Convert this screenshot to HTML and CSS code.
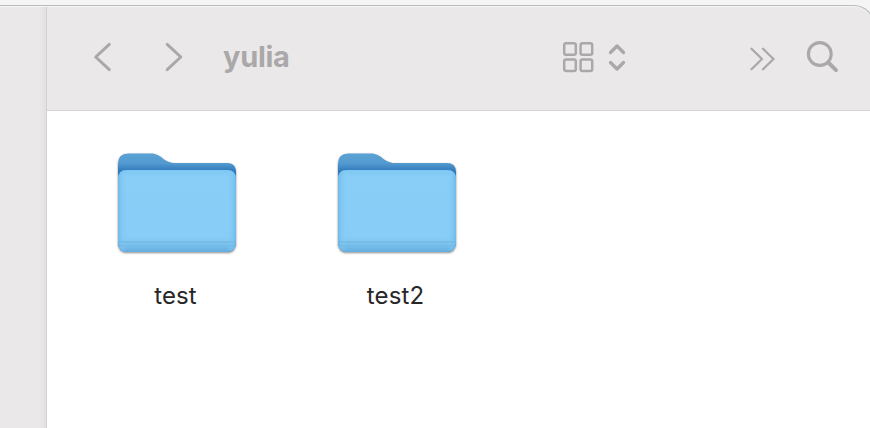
FILE: index.html
```html
<!DOCTYPE html>
<html lang="en">
<head>
<meta charset="utf-8">
<title>yulia</title>
<link rel="stylesheet" href="styles.css">
</head>
<body>
<svg class="defs" width="0" height="0" aria-hidden="true">
  <defs>
    <linearGradient id="back" x1="0" y1="0" x2="0" y2="1">
      <stop offset="0" stop-color="#5ba3d6"/><stop offset=".1" stop-color="#529acf"/><stop offset=".18" stop-color="#3079bb"/><stop offset="1" stop-color="#3079bb"/>
    </linearGradient>
    <linearGradient id="edge" x1="0" y1="0" x2="1" y2="0">
      <stop offset="0" stop-color="#66b5e5" stop-opacity=".8"/><stop offset=".025" stop-color="#79c2ed" stop-opacity=".65"/><stop offset=".08" stop-color="#88cdf6" stop-opacity="0"/>
      <stop offset=".92" stop-color="#88cdf6" stop-opacity="0"/><stop offset=".975" stop-color="#79c2ed" stop-opacity=".65"/><stop offset="1" stop-color="#66b5e5" stop-opacity=".8"/>
    </linearGradient>
    <linearGradient id="front" x1="0" y1="0" x2="0" y2="1">
      <stop offset="0" stop-color="#7ec8f2"/><stop offset=".08" stop-color="#88cef7"/><stop offset=".8" stop-color="#88cdf7"/><stop offset=".87" stop-color="#82c8f2"/>
      <stop offset=".88" stop-color="#76bce7"/><stop offset=".91" stop-color="#7dc3ee"/><stop offset=".95" stop-color="#6fb8e6"/><stop offset="1" stop-color="#66aedf"/>
    </linearGradient>
    <symbol id="folder" viewBox="0 0 128 108">
      <path d="M5 14Q5 3.5 15 3.5H38C49 3.5 50 13 62 13H114Q123 13 123 22V92Q123 102 113 102H15Q5 102 5 92Z" fill="url(#back)"/>
      <path d="M5 29Q5 20 14 20H114Q123 20 123 29V92Q123 102 113 102H15Q5 102 5 92Z" fill="url(#front)"/>
      <path d="M5 29Q5 20 14 20H114Q123 20 123 29V92Q123 102 113 102H15Q5 102 5 92Z" fill="url(#edge)"/>
      <path d="M5 91.5H123M5 95.5H123" stroke="#6bb2df" stroke-opacity=".55"/>
    </symbol>
  </defs>
</svg>
<div class="window">
  <aside class="sidebar"></aside>
  <main class="main">
    <header class="toolbar">
      <svg class="back" width="22" height="34" viewBox="0 0 22 34"><path d="M18.3 4.3L4.7 17 18.3 29.7"/></svg>
      <svg class="forward" width="22" height="34" viewBox="0 0 22 34"><path d="M4.2 4.3L17.8 17 4.2 29.7"/></svg>
      <h1 class="title">yulia</h1>
      <svg class="grid" width="32" height="32" viewBox="0 0 32 32"><rect x="2.2" y="2.2" width="11.6" height="11.6" rx="1.8"/><rect x="18.6" y="2.2" width="11.6" height="11.6" rx="1.8"/><rect x="2.2" y="18.4" width="11.6" height="11.6" rx="1.8"/><rect x="18.6" y="18.4" width="11.6" height="11.6" rx="1.8"/></svg>
      <svg class="updown" width="20" height="32" viewBox="0 0 20 32"><path d="M3.5 10.5L10 4 16.5 10.5M3.5 20.5L10 27 16.5 20.5"/></svg>
      <svg class="more" width="28" height="26" viewBox="0 0 28 26"><path d="M2.5 2.8L13 13 2.5 23.2M14 2.8L24.5 13 14 23.2"/></svg>
      <svg class="search" width="34" height="34" viewBox="0 0 34 34"><circle cx="13.8" cy="14" r="11.4"/><path class="handle" d="M22.3 22.5L30 30.2"/></svg>
    </header>
    <section class="files">
      <figure class="file"><svg class="icon" width="128" height="108"><use href="#folder"/></svg><figcaption>test</figcaption></figure>
      <figure class="file"><svg class="icon" width="128" height="108"><use href="#folder"/></svg><figcaption>test2</figcaption></figure>
    </section>
  </main>
</div>
</body>
</html>
```
FILE: styles.css
```css
* { box-sizing: border-box; }
body {
  margin: 0;
  height: 428px;
  padding-top: 5px;
  overflow: hidden;
  background: #f5f5f5;
  font-family: Inter, "Liberation Sans", sans-serif;
}
.defs { display: block; height: 0; }
.window {
  display: flex;
  width: 874px;
  height: 423px;
  border-top: 1px solid #bcbabb;
  border-right: 1px solid #bcbabb;
  border-radius: 0 20px 0 0;
  background: #eae8e9;
  box-shadow: inset 0 1px #f6f5f5;
  overflow: hidden;
}
.sidebar {
  width: 47px;
  flex: none;
  margin-top: 1px;
  border-right: 1px solid #d3d1d2;
  background: linear-gradient(to right, #eae8e9 40px, #e2e0e1 46px);
}
.main { flex: 1; display: flex; flex-direction: column; }
.toolbar {
  display: flex;
  align-items: center;
  height: 105px;
  flex: none;
  padding: 0 0 2px 44px;
  border-bottom: 1px solid #d6d4d5;
}
.toolbar svg {
  flex: none;
  fill: none;
  stroke: #aaa8a9;
  stroke-width: 3;
  stroke-linecap: round;
  stroke-linejoin: round;
}
.forward { margin-left: 50px; }
.title {
  width: 300px;
  margin: 0 0 0 38px;
  color: #aaa8a9;
  font-size: 29px;
  line-height: 36px;
  font-weight: 700;
  letter-spacing: -0.3px;
}
.toolbar .grid { margin-left: 39px; stroke-width: 2.5; }
.toolbar .updown { margin-left: 13px; margin-top: 2px; stroke-width: 3.3; }
.toolbar .more { margin-left: 122px; margin-top: 3px; stroke-width: 2.3; }
.toolbar .search { margin-left: 29px; stroke-width: 3.1; }
.toolbar .handle { stroke-width: 3.9; }
.files {
  flex: 1;
  display: flex;
  gap: 60px;
  padding: 39px 0 0 50px;
  background: #fff;
}
.file {
  display: flex;
  flex-direction: column;
  align-items: center;
  width: 160px;
  margin: 0;
}
.icon { filter: drop-shadow(0 1px 1px rgb(0 0 0 / 45%)); }
figcaption {
  margin: 23px 3px 0 0;
  color: #272727;
  font-size: 24px;
  line-height: 30px;
  letter-spacing: 0.1px;
}
```
